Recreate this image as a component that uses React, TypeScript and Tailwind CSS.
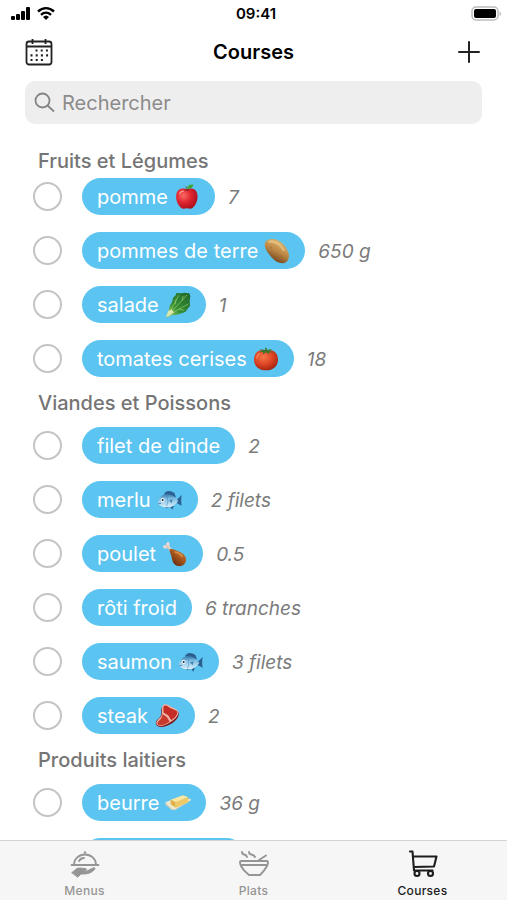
import type { ReactNode } from "react";

function Emoji({ children }: { children: ReactNode }) {
  return (
    <svg viewBox="0 0 78 78" className="h-[26px] w-[26px] shrink-0" aria-hidden="true">
      {children}
    </svg>
  );
}

function Apple() {
  return (
    <Emoji>
      <defs>
        <radialGradient id="apple" cx="0.35" cy="0.35" r="0.75">
          <stop offset="0" stopColor="#fb6a64" />
          <stop offset="0.45" stopColor="#df2630" />
          <stop offset="1" stopColor="#a60d1b" />
        </radialGradient>
      </defs>
      <path d="M39 17C30 10 13 12 8 27c-5 16 2 36 15 46 5 3 11 0 16 0s10 3 15 0c13-9 20-30 15-46C65 12 48 10 39 17Z" fill="url(#apple)" />
      <path d="M29 17c6 4 15 4 21 0-6-2-15-2-21 0Z" fill="#9d1520" />
      <path d="M39 18c0-4 0-7-3-10" stroke="#6b4220" strokeWidth="3" fill="none" strokeLinecap="round" />
      <path d="M39 14C40 6 47 1 58 2c-1 9-9 13-19 12Z" fill="#3fa535" />
      <path d="M17 29c2-6 7-8 11-7" stroke="#ffb3ad" strokeWidth="4" fill="none" strokeLinecap="round" opacity="0.7" />
    </Emoji>
  );
}

function Potato() {
  return (
    <Emoji>
      <defs>
        <linearGradient id="potato" x1="0.7" y1="0.1" x2="0.3" y2="0.9">
          <stop offset="0" stopColor="#dcb36c" />
          <stop offset="0.5" stopColor="#bd8845" />
          <stop offset="1" stopColor="#70431d" />
        </linearGradient>
      </defs>
      <path d="M4 12C10 2 27 0 40 6c14 6 29 22 34 41 3 13-2 25-13 28-14 3-27-5-37-16C12 46-3 27 4 12Z" fill="url(#potato)" />
      <path d="M16 11c15-3 34 7 43 25" stroke="#eccb8d" strokeWidth="7" fill="none" strokeLinecap="round" opacity="0.7" />
      <path d="m20 28 3 1M36 44l3 2M52 56l3-1" stroke="#96662e" strokeWidth="2" strokeLinecap="round" />
    </Emoji>
  );
}

function Lettuce() {
  return (
    <Emoji>
      <defs>
        <linearGradient id="lettuce" x1="1" y1="0" x2="0" y2="1">
          <stop offset="0" stopColor="#20662b" />
          <stop offset="0.6" stopColor="#358f37" />
          <stop offset="1" stopColor="#a9cf68" />
        </linearGradient>
      </defs>
      <path d="m3 74 9-21 2-12 7-10 3-14 8-7 2-7 14 1 10-2 15 2 3 9-2 14 1 15-7 8-6 9-12 5-14 4-14 1-13 6Z" fill="url(#lettuce)" />
      <path d="M7 72 24 43 41 10M9 71l29-32 28-30M12 71l27-18 31-17M31 37l2-15M41 51l17 4M52 25l2-13" stroke="#9bcf66" strokeWidth="2" fill="none" />
      <path d="m3 74 7-17 9-5 8 9-15 11Z" fill="#dae8ae" />
    </Emoji>
  );
}

function Tomato() {
  return (
    <Emoji>
      <defs>
        <radialGradient id="tomato" cx="0.4" cy="0.35" r="0.7">
          <stop offset="0" stopColor="#f87748" />
          <stop offset="0.55" stopColor="#dc4222" />
          <stop offset="1" stopColor="#9e230f" />
        </radialGradient>
      </defs>
      <path d="M39 13c22-5 36 8 36 28 0 19-15 32-36 32S3 60 3 41C3 21 17 8 39 13Z" fill="url(#tomato)" />
      <path d="m37 12-1-6 4-1 3 7 15-3-8 6 12 4-14 0 1 6-10-6-10 7 2-8-14 1 10-5-8-4Z" fill="#41742a" />
      <path d="M11 36c1-7 5-11 9-13" stroke="#ffad83" strokeWidth="4" strokeLinecap="round" fill="none" opacity="0.6" />
    </Emoji>
  );
}

function Fish() {
  return (
    <Emoji>
      <defs>
        <linearGradient id="fish" x1="0" y1="0" x2="0" y2="1">
          <stop offset="0" stopColor="#3373a6" />
          <stop offset="0.35" stopColor="#7dbee2" />
          <stop offset="1" stopColor="#dceffa" />
        </linearGradient>
      </defs>
      <path d="M21 21c6-12 20-11 31-3l5 13-30-7Z" fill="#2c5f91" />
      <path d="m22 57 5 7 9-3M40 60l6 8 5-12" fill="#2c5f91" />
      <path d="M59 39 74 24c-2 11-2 22 0 32L59 48Z" fill="#2c5f91" />
      <path d="M3 43c6-15 16-22 28-22 14 0 23 9 33 21-9 13-20 19-33 19S9 57 4 50Z" fill="url(#fish)" />
      <path d="M28 25c6 10 6 23 0 32" stroke="#4f93c2" strokeWidth="2" fill="none" />
      <path d="m36 40 11-3-3 12Z" fill="#4386b5" />
      <circle cx="17" cy="39" r="6" fill="#f7fbfd" />
      <circle cx="17" cy="39" r="3" fill="#12283c" />
      <path d="m4 50 8-1" stroke="#2c5f91" strokeWidth="2" />
    </Emoji>
  );
}

function Drumstick() {
  return (
    <Emoji>
      <defs>
        <linearGradient id="drumstick" x1="1" y1="0" x2="0.2" y2="1">
          <stop offset="0" stopColor="#d58432" />
          <stop offset="0.5" stopColor="#a6561c" />
          <stop offset="1" stopColor="#5b250c" />
        </linearGradient>
      </defs>
      <path d="M31 27 22 14c4-7-3-14-8-9-2 2-1 5-1 7-9-2-13 6-6 10 3 2 7 0 9-1l10 12Z" fill="#ead9d2" />
      <path d="m13 13 14 17" stroke="#b99b91" strokeWidth="2" />
      <path d="M23 25c5-3 17 2 29 7 14 6 22 16 20 27-2 12-13 18-24 16-14-2-17-15-19-26-1-9-8-18-6-24Z" fill="url(#drumstick)" />
      <path d="M40 33c9 2 16 7 20 13" stroke="#eaa755" strokeWidth="5" fill="none" strokeLinecap="round" opacity="0.7" />
    </Emoji>
  );
}

function Steak() {
  return (
    <Emoji>
      <path d="M28 9c9-6 17 1 25 6 10 6 20 7 21 16 1 12-9 24-22 31-14 8-31 14-42 7-6-4-6-12-1-18 8-7 13-12 13-22 0-8-1-16 6-20Z" fill="#7e171a" />
      <path d="M29 5c8-4 15 2 22 6 12 6 22 9 22 17 0 12-12 23-24 30-13 8-29 15-38 9-6-4-5-11 1-17 8-7 13-13 12-23 0-9-1-19 5-22Z" fill="#efb3a3" />
      <path d="M31 8c7-3 12 4 19 8 10 5 20 6 20 12 0 9-9 18-19 24l-8-12-14-10c0-7-3-19 2-22Z" fill="#c42c25" />
      <path d="M26 33c-2 10-5 16-12 21-5 5-5 10 0 12 9 3 23-3 33-10l-8-13Z" fill="#c93a2e" />
      <path d="m28 31 13 7 9 15" stroke="#f1b8a7" strokeWidth="4" fill="none" />
    </Emoji>
  );
}

function Butter() {
  return (
    <Emoji>
      <path d="m1 39 16-5 60-7v5L30 61 19 59 1 44Z" fill="#c9cdbc" />
      <path d="m1 37 16-6 60-5v4L29 58l-9-1Z" fill="#eee9cc" />
      <path d="m17 29 37-13 16 6-38 14Z" fill="#fbe8a0" />
      <path d="m17 29 15 7v17L17 43Z" fill="#dfb149" />
      <path d="m32 36 38-14v15L32 53Z" fill="#edc967" />
    </Emoji>
  );
}

type Item = { name: string; qty: string; icon?: ReactNode };

const groups: { title: string; items: Item[] }[] = [
  {
    title: "Fruits et Légumes",
    items: [
      { name: "pomme", qty: "7", icon: <Apple /> },
      { name: "pommes de terre", qty: "650 g", icon: <Potato /> },
      { name: "salade", qty: "1", icon: <Lettuce /> },
      { name: "tomates cerises", qty: "18", icon: <Tomato /> },
    ],
  },
  {
    title: "Viandes et Poissons",
    items: [
      { name: "filet de dinde", qty: "2" },
      { name: "merlu", qty: "2 filets", icon: <Fish /> },
      { name: "poulet", qty: "0.5", icon: <Drumstick /> },
      { name: "rôti froid", qty: "6 tranches" },
      { name: "saumon", qty: "3 filets", icon: <Fish /> },
      { name: "steak", qty: "2", icon: <Steak /> },
    ],
  },
  {
    title: "Produits laitiers",
    items: [{ name: "beurre", qty: "36 g", icon: <Butter /> }],
  },
];

function Row({ item }: { item: Item }) {
  return (
    <li className="h-[54px] pt-2">
      <label className="flex items-center">
        <input type="checkbox" className="h-[29px] w-[29px] shrink-0 appearance-none rounded-full border-2 border-[#c4c4c4] bg-white checked:bg-[#5bc4f0]" />
        <span className="ml-5 flex h-[37px] items-center gap-1.5 whitespace-nowrap rounded-full bg-[#5bc4f0] px-[15px] text-white">
          {item.name}
          {item.icon}
        </span>
        <span className="ml-[13px] whitespace-nowrap pt-0.5 text-[19px] italic text-[#7b7b7b]">{item.qty}</span>
      </label>
    </li>
  );
}

function StatusBar() {
  return (
    <div className="grid h-7 shrink-0 grid-cols-3 items-center pr-[5px] pl-[10px]">
      <svg viewBox="0 0 46 16" className="h-4 w-[46px]" aria-hidden="true">
        <g fill="#000">
          <rect x="1" y="10" width="4" height="4" rx="1" />
          <rect x="6" y="8" width="4" height="6" rx="1" />
          <rect x="11" y="5" width="4" height="9" rx="1" />
          <rect x="16" y="1" width="4" height="13" rx="1" />
          <path d="m36 14-3-3c2-2 4-2 6 0Z" />
        </g>
        <path d="M28 5.500c5-4.500 11-4.500 16 0M31 8.800c3-2.800 7-2.800 10 0" fill="none" stroke="#000" strokeWidth="2.400" />
      </svg>
      <time className="text-center text-[15px] leading-5 font-semibold">09:41</time>
      <svg viewBox="0 0 31 16" className="h-4 w-[31px] justify-self-end" aria-hidden="true">
        <rect x="1" y="1" width="26" height="13" rx="4" fill="#fff" stroke="#bcbcbc" strokeWidth="1.500" />
        <rect x="3" y="3" width="22" height="9" rx="2" fill="#000" />
        <path d="M28.500 5.500c2 .5 2 4 0 4.500Z" fill="#bcbcbc" />
      </svg>
    </div>
  );
}

function CalendarIcon() {
  return (
    <svg viewBox="0 0 28 28" className="h-7 w-7" fill="none" stroke="#222" strokeWidth="1.800" aria-hidden="true">
      <rect x="1.500" y="3.500" width="25" height="23" rx="2.500" />
      <path d="M1.500 8.500h25M7.500 1v5M20.500 1v5" />
      <path d="M10.500 12.500h13M5.500 17.300h18M5.500 22h13" strokeWidth="2.200" strokeDasharray="2 3.200" />
    </svg>
  );
}

function MenusIcon() {
  return (
    <svg viewBox="0 0 30 28" className="h-7 w-[30px]" fill="none" stroke="currentColor" strokeWidth="1.800" strokeLinecap="round" strokeLinejoin="round" aria-hidden="true">
      <path d="M4 14.500C4 9 9 4.500 15 4.500s11 4.500 11 10M1.500 15h27M9 11c1-2 3-3 5-3" />
      <circle cx="15" cy="2.500" r="1.200" fill="currentColor" stroke="none" />
      <path d="M2 22.500 7 18.500c3-1 5 0 8 0 2 0 2 2 0 2l-3 .5 4 .500 7-3.500c2-.5 3 0 1 2-4 4-8 4-13 4l-3 3Z" fill="currentColor" strokeWidth="1" />
    </svg>
  );
}

function BowlIcon() {
  return (
    <svg viewBox="0 0 30 28" className="h-7 w-[30px]" fill="none" stroke="currentColor" strokeWidth="1.900" strokeLinecap="round" strokeLinejoin="round" aria-hidden="true">
      <path d="M2 11h26c1.500 0 1 3 0 5-2 4-4 6-7 9H10c-4-3-6-5-8-9-1-2-1.500-5 0-5ZM2 15h26M20 10l7-4.500M3 2c0 4 4 1 5 5M10 2c0 4 4 1 6 5" />
    </svg>
  );
}

function CartIcon() {
  return (
    <svg viewBox="0 0 30 28" className="h-7 w-[30px]" fill="none" stroke="currentColor" strokeWidth="2.100" strokeLinecap="round" strokeLinejoin="round" aria-hidden="true">
      <path d="M2 1.500h2.500L6 20.500h18.500M5 6.500h23.500l-2.500 10L6 17" />
      <circle cx="9" cy="23.500" r="2.500" />
      <circle cx="22.500" cy="23.500" r="2.500" />
    </svg>
  );
}

const tabs = [
  { label: "Menus", icon: <MenusIcon />, active: false },
  { label: "Plats", icon: <BowlIcon />, active: false },
  { label: "Courses", icon: <CartIcon />, active: true },
];

export default function App() {
  return (
    <div className="flex h-screen flex-col bg-white font-['Inter','Liberation_Sans',sans-serif] text-black">
      <StatusBar />
      <header className="flex h-12 shrink-0 items-center justify-between px-[25px]">
        <button type="button" aria-label="Calendrier">
          <CalendarIcon />
        </button>
        <h1 className="text-xl font-semibold">Courses</h1>
        <button type="button" aria-label="Ajouter">
          <svg viewBox="0 0 28 28" className="h-7 w-7" stroke="#222" strokeWidth="2" strokeLinecap="round" aria-hidden="true">
            <path d="M5 14h20M15 4v20" />
          </svg>
        </button>
      </header>
      <label className="mx-[25px] mt-[5px] flex h-[43px] shrink-0 items-center gap-1.5 rounded-[10px] bg-[#eeeeee] pl-[9px]">
        <svg viewBox="0 0 22 22" className="h-[22px] w-[22px] shrink-0" fill="none" stroke="#858585" strokeWidth="1.800" strokeLinecap="round" aria-hidden="true">
          <circle cx="8.500" cy="8.500" r="7" />
          <path d="m13.500 13.500 6 5.500" />
        </svg>
        <input type="search" aria-label="Rechercher" placeholder="Rechercher" className="min-w-0 flex-1 bg-transparent text-xl outline-none placeholder:text-[#8b8b8b]" />
      </label>
      <main className="min-h-0 flex-1 overflow-hidden px-[33px] pt-[26px] text-xl leading-6">
        {groups.map((group, index) => (
          <section key={group.title}>
            <h2 className={`pl-[5px] font-medium text-[#757575] ${index === 0 ? "h-5 leading-[22px]" : "h-[33px] leading-[35px]"}`}>{group.title}</h2>
            <ul>
              {group.items.map((item) => (
                <Row key={item.name} item={item} />
              ))}
            </ul>
          </section>
        ))}
        <div className="ml-[49px] mt-2 h-[37px] w-[163px] rounded-full bg-[#5bc4f0]" />
      </main>
      <nav className="grid h-[60px] shrink-0 grid-cols-3 border-t border-[#d3d3d3] bg-[#f6f6f6]">
        {tabs.map((tab) => (
          <button
            key={tab.label}
            type="button"
            className={`flex flex-col items-center gap-[5px] pt-[9px] text-xs leading-4 font-medium tracking-wide ${tab.active ? "text-[#1c1c1c]" : "text-[#959595]"}`}
          >
            {tab.icon}
            {tab.label}
          </button>
        ))}
      </nav>
    </div>
  );
}
